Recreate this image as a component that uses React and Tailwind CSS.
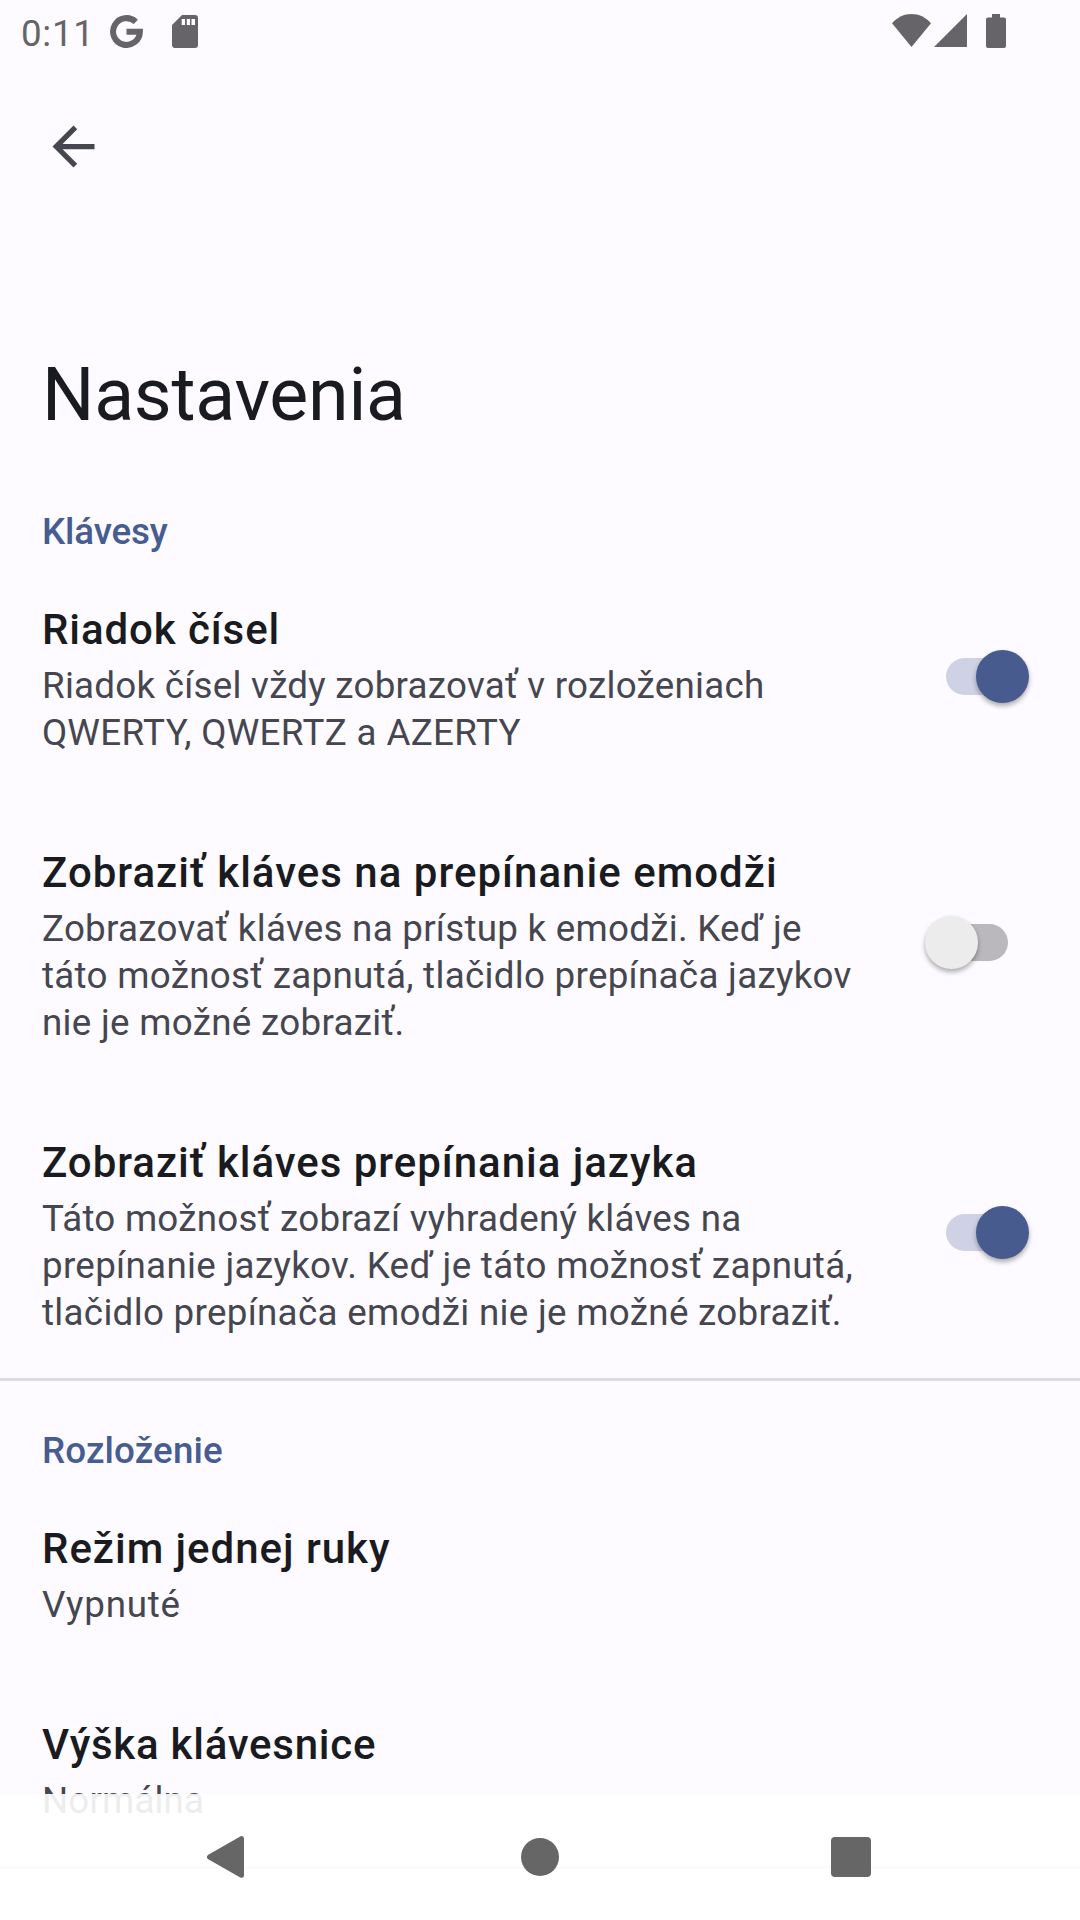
function StatusBar() {
  return (
    <header className="flex h-[63px] items-start pl-[21px] text-[#666468]">
      <span className="mt-2 w-[89px] text-[36.75px] leading-[51px] font-normal tracking-[0.7px]">0:11</span>
      {/* Google notification */}
      <svg className="mt-[15px] h-[33px] w-[33px]" viewBox="0 0 33 33" fill="none" stroke="currentColor" strokeWidth="6">
        <path d="M25.8 6.9A13.4 13.4 0 1 0 29.9 16.7H16.5" />
      </svg>
      {/* Storage notification */}
      <svg className="mt-[15px] ml-[29px] h-[33px] w-[26px]" viewBox="0 0 26 33" fill="currentColor">
        <path d="M10 0H23Q26 0 26 3V30Q26 33 23 33H3Q0 33 0 30V10Z" />
        <path fill="#ffffff" d="M9.7 4H13V10H9.7ZM14.8 4H18V10H14.8ZM19.5 4H23V10H19.5Z" />
      </svg>
      <div className="mt-[14px] mr-[74px] ml-auto flex items-start">
        <svg className="h-[33px] w-[39px]" viewBox="0 0 39 33" fill="currentColor">
          <path d="M0 9.2C5.5 3.2 12 0 19.5 0S33.5 3.2 39 9.2L19.5 33Z" />
        </svg>
        <svg className="ml-[3px] h-[33px] w-[33px]" viewBox="0 0 33 33" fill="currentColor">
          <path d="M0 33L33 0V33Z" />
        </svg>
        <svg className="ml-[19px] h-[34px] w-5" viewBox="0 0 20 34" fill="currentColor">
          <path d="M6 0H14V3.5H18Q20 3.5 20 5.5V32Q20 34 18 34H2Q0 34 0 32V5.5Q0 3.5 2 3.5H6Z" />
        </svg>
      </div>
    </header>
  );
}

function Toggle({ on }) {
  return (
    <span
      role="switch"
      aria-checked={on}
      className={
        on
          ? "mt-[-6px] mr-[51px] flex h-[53px] w-[104px] items-center justify-end"
          : "mt-[-6px] mr-[51px] flex h-[53px] w-[104px] items-center"
      }
    >
      <span className={on ? "h-[37px] w-[62px] shrink-0 rounded-full bg-[#ced2e4]" : "order-2 h-[37px] w-[62px] shrink-0 rounded-full bg-[#bab8bc]"} />
      <span
        className={
          on
            ? "z-10 -ml-8 h-[53px] w-[53px] shrink-0 rounded-full bg-[#475b8f] shadow-[0_3px_5px_rgba(0,0,0,0.32)]"
            : "z-10 -mr-8 h-[53px] w-[53px] shrink-0 rounded-full bg-[#ececec] shadow-[0_3px_5px_rgba(0,0,0,0.32)]"
        }
      />
    </span>
  );
}

function SectionLabel({ tracking, children }) {
  return <h2 className={`h-24 pt-[46px] pl-[42px] text-[36.75px] leading-[47px] font-medium text-[#475d92] ${tracking}`}>{children}</h2>;
}

function Line({ tracking = "tracking-[0.29px]", children }) {
  return <span className={`block ${tracking}`}>{children}</span>;
}

function Row({ title, tracking = "tracking-[0.97px]", toggle, children }) {
  return (
    <section className="flex items-center justify-between pt-11 pb-[45px] pl-[42px] whitespace-nowrap">
      <div>
        <h3 className={`mb-1 text-[42px] leading-[56px] font-medium text-[#1a1b20] ${tracking}`}>{title}</h3>
        <p className="text-[36.75px] leading-[47px] text-[#45464f]">{children}</p>
      </div>
      {toggle !== undefined && <Toggle on={toggle} />}
    </section>
  );
}

function Divider() {
  return <hr className="-mt-[3px] h-[3px] border-0 bg-[#dddbdf]" />;
}

function NavigationBar() {
  return (
    <nav className="absolute inset-x-0 bottom-0 flex h-[126px] items-center bg-white/90 pl-[206px] text-[#666666]">
      <svg className="h-[42px] w-[38px]" viewBox="0 0 38 42" fill="currentColor" stroke="currentColor" strokeWidth="5" strokeLinejoin="round">
        <path d="M3.5 21L35.5 2.7V39.3Z" />
      </svg>
      <span className="ml-[277px] h-[38px] w-[38px] rounded-full bg-current" />
      <span className="ml-[272px] h-10 w-10 rounded-[4px] bg-current" />
    </nav>
  );
}

export default function App() {
  return (
    <div className="relative h-[1920px] w-[1080px] overflow-hidden bg-[#fdfbff] font-['Roboto',sans-serif]">
      <StatusBar />
      <div className="h-[288px] pt-[52px] pl-[42px] text-[#45464f]">
        <svg className="h-[63px] w-[63px]" viewBox="0 0 24 24" fill="currentColor">
          <path d="M20 11H7.83l5.59-5.59L12 4l-8 8 8 8 1.41-1.41L7.83 13H20v-2z" />
        </svg>
      </div>
      <h1 className="h-[111px] pl-[42px] text-[73.5px] leading-[88px] tracking-[-0.27px] text-[#1a1b20]">Nastavenia</h1>
      <main>
        <SectionLabel tracking="tracking-[-0.15px]">Klávesy</SectionLabel>
        <Row title="Riadok čísel" tracking="tracking-[0.9px]" toggle={true}>
          <Line tracking="tracking-[0.25px]">Riadok čísel vždy zobrazovať v rozloženiach</Line>
          <Line tracking="tracking-[0.36px]">QWERTY, QWERTZ a AZERTY</Line>
        </Row>
        <Row title="Zobraziť kláves na prepínanie emodži" tracking="tracking-[1.01px]" toggle={false}>
          <Line tracking="tracking-[0.26px]">Zobrazovať kláves na prístup k emodži. Keď je</Line>
          <Line>táto možnosť zapnutá, tlačidlo prepínača jazykov</Line>
          <Line>nie je možné zobraziť.</Line>
        </Row>
        <Row title="Zobraziť kláves prepínania jazyka" toggle={true}>
          <Line tracking="tracking-[0.25px]">Táto možnosť zobrazí vyhradený kláves na</Line>
          <Line tracking="tracking-[0.31px]">prepínanie jazykov. Keď je táto možnosť zapnutá,</Line>
          <Line tracking="tracking-[0.3px]">tlačidlo prepínača emodži nie je možné zobraziť.</Line>
        </Row>
        <Divider />
        <SectionLabel tracking="tracking-[0.13px]">Rozloženie</SectionLabel>
        <Row title="Režim jednej ruky">
          <Line tracking="tracking-[0.8px]">Vypnuté</Line>
        </Row>
        <Row title="Výška klávesnice" tracking="tracking-[0.75px]">
          <Line tracking="tracking-[0.13px]">Normálna</Line>
        </Row>
        <Divider />
      </main>
      <NavigationBar />
    </div>
  );
}
